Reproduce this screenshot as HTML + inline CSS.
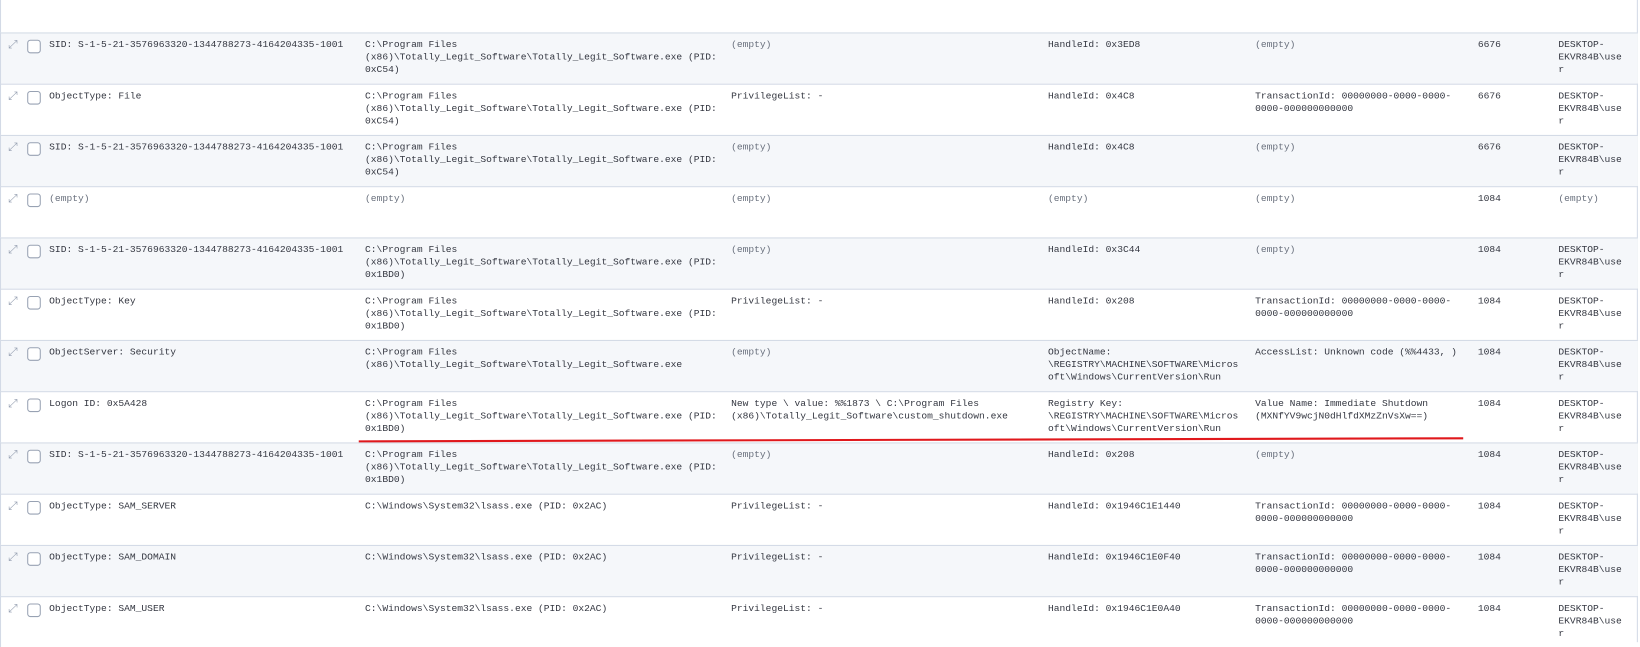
<!DOCTYPE html>
<html><head><style>
body{margin:0;width:1640px;height:642px;background:#fff;overflow:hidden;position:relative;font-family:"Liberation Mono",monospace;font-size:9.2px;line-height:12px;color:#343741}
.w{position:absolute;left:0;top:0;width:1568px;height:614px;transform:scale(1.0459);transform-origin:0 0}
.top{position:absolute;left:0;top:0;width:1565px;height:31px;border-left:1px solid #d3dae6}
.r{position:absolute;left:0;width:1565px;height:48px;border-top:1px solid #d3dae6;border-left:1px solid #d3dae6}
.g{background:#f5f7fa}
.c{position:absolute;top:5px;white-space:pre}
.e{color:#69707d}
.ic{position:absolute;left:7px;top:5px;color:#98a2b3;font-size:11px;font-family:"DejaVu Sans",sans-serif}
.cb{position:absolute;left:25px;top:6px;width:11px;height:11px;border:1px solid #98a2b3;border-radius:3px;background:#fff}
.x{position:absolute;left:1565px;top:0;height:614px;width:1px;background:#d3dae6}
.m{position:absolute;left:1566px;top:5px;white-space:pre;color:#343741}
.red{position:absolute;left:343px;top:421px;width:1056px;height:2px;background:#e0181c;transform:rotate(-0.16deg);transform-origin:left}
</style></head><body><div class="w">
<div class="top"></div>
<div class="x"></div>

<div class="r g" style="top:31px"><span class="ic">⤢</span><span class="cb"></span>
<div class="c" style="left:46px">SID: S-1-5-21-3576963320-1344788273-4164204335-1001</div>
<div class="c" style="left:348px">C:\Program Files
(x86)\Totally_Legit_Software\Totally_Legit_Software.exe (PID:
0xC54)</div>
<div class="c e" style="left:698px">(empty)</div>
<div class="c" style="left:1001px">HandleId: 0x3ED8</div>
<div class="c e" style="left:1199px">(empty)</div>
<div class="c" style="left:1412px">6676</div>
<div class="c" style="left:1489px">DESKTOP-
EKVR84B\use
r</div></div>

<div class="r" style="top:80px"><span class="ic">⤢</span><span class="cb"></span>
<div class="c" style="left:46px">ObjectType: File</div>
<div class="c" style="left:348px">C:\Program Files
(x86)\Totally_Legit_Software\Totally_Legit_Software.exe (PID:
0xC54)</div>
<div class="c" style="left:698px">PrivilegeList: -</div>
<div class="c" style="left:1001px">HandleId: 0x4C8</div>
<div class="c" style="left:1199px">TransactionId: 00000000-0000-0000-
0000-000000000000</div>
<div class="c" style="left:1412px">6676</div>
<div class="c" style="left:1489px">DESKTOP-
EKVR84B\use
r</div></div>

<div class="r g" style="top:129px"><span class="ic">⤢</span><span class="cb"></span>
<div class="c" style="left:46px">SID: S-1-5-21-3576963320-1344788273-4164204335-1001</div>
<div class="c" style="left:348px">C:\Program Files
(x86)\Totally_Legit_Software\Totally_Legit_Software.exe (PID:
0xC54)</div>
<div class="c e" style="left:698px">(empty)</div>
<div class="c" style="left:1001px">HandleId: 0x4C8</div>
<div class="c e" style="left:1199px">(empty)</div>
<div class="c" style="left:1412px">6676</div>
<div class="c" style="left:1489px">DESKTOP-
EKVR84B\use
r</div></div>

<div class="r" style="top:178px"><span class="ic">⤢</span><span class="cb"></span>
<div class="c e" style="left:46px">(empty)</div>
<div class="c e" style="left:348px">(empty)</div>
<div class="c e" style="left:698px">(empty)</div>
<div class="c e" style="left:1001px">(empty)</div>
<div class="c e" style="left:1199px">(empty)</div>
<div class="c" style="left:1412px">1084</div>
<div class="c e" style="left:1489px">(empty)</div></div>

<div class="r g" style="top:227px"><span class="ic">⤢</span><span class="cb"></span>
<div class="c" style="left:46px">SID: S-1-5-21-3576963320-1344788273-4164204335-1001</div>
<div class="c" style="left:348px">C:\Program Files
(x86)\Totally_Legit_Software\Totally_Legit_Software.exe (PID:
0x1BD0)</div>
<div class="c e" style="left:698px">(empty)</div>
<div class="c" style="left:1001px">HandleId: 0x3C44</div>
<div class="c e" style="left:1199px">(empty)</div>
<div class="c" style="left:1412px">1084</div>
<div class="c" style="left:1489px">DESKTOP-
EKVR84B\use
r</div></div>

<div class="r" style="top:276px"><span class="ic">⤢</span><span class="cb"></span>
<div class="c" style="left:46px">ObjectType: Key</div>
<div class="c" style="left:348px">C:\Program Files
(x86)\Totally_Legit_Software\Totally_Legit_Software.exe (PID:
0x1BD0)</div>
<div class="c" style="left:698px">PrivilegeList: -</div>
<div class="c" style="left:1001px">HandleId: 0x208</div>
<div class="c" style="left:1199px">TransactionId: 00000000-0000-0000-
0000-000000000000</div>
<div class="c" style="left:1412px">1084</div>
<div class="c" style="left:1489px">DESKTOP-
EKVR84B\use
r</div></div>

<div class="r g" style="top:325px"><span class="ic">⤢</span><span class="cb"></span>
<div class="c" style="left:46px">ObjectServer: Security</div>
<div class="c" style="left:348px">C:\Program Files
(x86)\Totally_Legit_Software\Totally_Legit_Software.exe</div>
<div class="c e" style="left:698px">(empty)</div>
<div class="c" style="left:1001px">ObjectName:
\REGISTRY\MACHINE\SOFTWARE\Micros
oft\Windows\CurrentVersion\Run</div>
<div class="c" style="left:1199px">AccessList: Unknown code (%%4433, )</div>
<div class="c" style="left:1412px">1084</div>
<div class="c" style="left:1489px">DESKTOP-
EKVR84B\use
r</div></div>

<div class="r" style="top:374px"><span class="ic">⤢</span><span class="cb"></span>
<div class="c" style="left:46px">Logon ID: 0x5A428</div>
<div class="c" style="left:348px">C:\Program Files
(x86)\Totally_Legit_Software\Totally_Legit_Software.exe (PID:
0x1BD0)</div>
<div class="c" style="left:698px">New type \ value: %%1873 \ C:\Program Files
(x86)\Totally_Legit_Software\custom_shutdown.exe</div>
<div class="c" style="left:1001px">Registry Key:
\REGISTRY\MACHINE\SOFTWARE\Micros
oft\Windows\CurrentVersion\Run</div>
<div class="c" style="left:1199px">Value Name: Immediate Shutdown
(MXNfYV9wcjN0dHlfdXMzZnVsXw==)</div>
<div class="c" style="left:1412px">1084</div>
<div class="c" style="left:1489px">DESKTOP-
EKVR84B\use
r</div></div>

<div class="r g" style="top:423px"><span class="ic">⤢</span><span class="cb"></span>
<div class="c" style="left:46px">SID: S-1-5-21-3576963320-1344788273-4164204335-1001</div>
<div class="c" style="left:348px">C:\Program Files
(x86)\Totally_Legit_Software\Totally_Legit_Software.exe (PID:
0x1BD0)</div>
<div class="c e" style="left:698px">(empty)</div>
<div class="c" style="left:1001px">HandleId: 0x208</div>
<div class="c e" style="left:1199px">(empty)</div>
<div class="c" style="left:1412px">1084</div>
<div class="c" style="left:1489px">DESKTOP-
EKVR84B\use
r</div></div>

<div class="r" style="top:472px"><span class="ic">⤢</span><span class="cb"></span>
<div class="c" style="left:46px">ObjectType: SAM_SERVER</div>
<div class="c" style="left:348px">C:\Windows\System32\lsass.exe (PID: 0x2AC)</div>
<div class="c" style="left:698px">PrivilegeList: -</div>
<div class="c" style="left:1001px">HandleId: 0x1946C1E1440</div>
<div class="c" style="left:1199px">TransactionId: 00000000-0000-0000-
0000-000000000000</div>
<div class="c" style="left:1412px">1084</div>
<div class="c" style="left:1489px">DESKTOP-
EKVR84B\use
r</div></div>

<div class="r g" style="top:521px"><span class="ic">⤢</span><span class="cb"></span>
<div class="c" style="left:46px">ObjectType: SAM_DOMAIN</div>
<div class="c" style="left:348px">C:\Windows\System32\lsass.exe (PID: 0x2AC)</div>
<div class="c" style="left:698px">PrivilegeList: -</div>
<div class="c" style="left:1001px">HandleId: 0x1946C1E0F40</div>
<div class="c" style="left:1199px">TransactionId: 00000000-0000-0000-
0000-000000000000</div>
<div class="c" style="left:1412px">1084</div>
<div class="c" style="left:1489px">DESKTOP-
EKVR84B\use
r</div></div>

<div class="r" style="top:570px"><span class="ic">⤢</span><span class="cb"></span>
<div class="c" style="left:46px">ObjectType: SAM_USER</div>
<div class="c" style="left:348px">C:\Windows\System32\lsass.exe (PID: 0x2AC)</div>
<div class="c" style="left:698px">PrivilegeList: -</div>
<div class="c" style="left:1001px">HandleId: 0x1946C1E0A40</div>
<div class="c" style="left:1199px">TransactionId: 00000000-0000-0000-
0000-000000000000</div>
<div class="c" style="left:1412px">1084</div>
<div class="c" style="left:1489px">DESKTOP-
EKVR84B\use
r</div></div>

<div class="red"></div>
</div></body></html>
